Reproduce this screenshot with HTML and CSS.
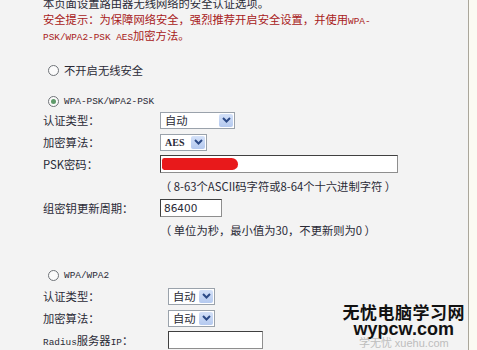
FILE: index.html
```
<!DOCTYPE html>
<html lang="zh-CN">
<head>
  <meta charset="UTF-8">
  <title>无线网络安全设置</title>
  <link rel="stylesheet" href="styles.css">
</head>
<body>
  <div class="page">
    <div class="intro">
      <p>本页面设置路由器无线网络的安全认证选项。</p>
      <p class="warn">安全提示：为保障网络安全，强烈推荐开启安全设置，并使用<span class="en">WPA-</span></p>
      <p class="warn"><span class="en">PSK/WPA2-PSK AES</span>加密方法。</p>
    </div>

    <div class="radio-row first">
      <span class="radio"></span>
      <span>不开启无线安全</span>
    </div>

    <div class="radio-row">
      <span class="radio checked"></span>
      <span class="en">WPA-PSK/WPA2-PSK</span>
    </div>
    <div class="row">
      <span class="label">认证类型：</span>
      <div class="select wide"><span class="val">自动</span><span class="arrow"><svg width="9" height="6" viewBox="0 0 9 6"><path d="M1 1l3.5 3.5L8 1" fill="none" stroke="#2c4a86" stroke-width="2"/></svg></span></div>
    </div>
    <div class="row">
      <span class="label">加密算法：</span>
      <div class="select"><span class="val en">AES</span><span class="arrow"><svg width="9" height="6" viewBox="0 0 9 6"><path d="M1 1l3.5 3.5L8 1" fill="none" stroke="#2c4a86" stroke-width="2"/></svg></span></div>
    </div>
    <div class="row">
      <span class="label">PSK密码：</span>
      <div class="field psk"><span class="scribble"></span></div>
    </div>
    <div class="row hint">（ 8-63个ASCII码字符或8-64个十六进制字符 ）</div>
    <div class="row">
      <span class="label">组密钥更新周期：</span>
      <div class="field short"><span class="num">86400</span></div>
    </div>
    <div class="row hint">（ 单位为秒，最小值为30，不更新则为0 ）</div>

    <div class="radio-row third">
      <span class="radio"></span>
      <span class="en">WPA/WPA2</span>
    </div>
    <div class="row second">
      <span class="label">认证类型：</span>
      <div class="select"><span class="val">自动</span><span class="arrow"><svg width="9" height="6" viewBox="0 0 9 6"><path d="M1 1l3.5 3.5L8 1" fill="none" stroke="#2c4a86" stroke-width="2"/></svg></span></div>
    </div>
    <div class="row second">
      <span class="label">加密算法：</span>
      <div class="select"><span class="val">自动</span><span class="arrow"><svg width="9" height="6" viewBox="0 0 9 6"><path d="M1 1l3.5 3.5L8 1" fill="none" stroke="#2c4a86" stroke-width="2"/></svg></span></div>
    </div>
    <div class="row second">
      <span class="label"><span class="en">Radius</span>服务器<span class="en">IP</span>：</span>
      <div class="field radius"></div>
    </div>

    <div class="mark">
      <div class="mark-cn">无忧电脑学习网</div>
      <div class="mark-en">wypcw.com</div>
      <div class="mark-sub">学无忧 xuehu.com</div>
    </div>
  </div>
</body>
</html>
```

FILE: styles.css
```
body {
  margin: 0;
  background: #fbfaf2;
  overflow: hidden;
  font-family: "Noto Sans CJK SC", "Liberation Sans", sans-serif;
  font-size: 11.3px;
  color: #2a2a36;
}

.page {
  position: relative;
  width: 469px;
  height: 350px;
  background: #f3f3f3;
  border-right: 1px solid #aaa69a;
  padding-left: 43px;
  box-sizing: border-box;
  overflow: hidden;
}

p {
  margin: 0;
  line-height: 16px;
  height: 16px;
  white-space: nowrap;
}

.intro {
  margin-top: -5px;
}

.warn {
  color: #a82020;
}

.en {
  font-family: "Liberation Mono", monospace;
  font-size: 9.4px;
}

.radio-row {
  display: flex;
  align-items: center;
  gap: 5px;
  height: 16px;
  padding-left: 5px;
  margin-top: 15px;
}

.radio-row.first {
  margin-top: 19px;
}

.radio-row.third {
  margin-top: 26px;
}

.radio {
  width: 9px;
  height: 9px;
  border: 1px solid #6f7378;
  border-radius: 50%;
  background: #fbfbfb;
  display: flex;
  align-items: center;
  justify-content: center;
}

.radio.checked::after {
  content: "";
  width: 5px;
  height: 5px;
  border-radius: 50%;
  background: #5f9a6a;
}

.row {
  display: flex;
  align-items: center;
  height: 22px;
}

.label {
  width: 117px;
  flex: none;
  white-space: nowrap;
}

.row.second .label {
  width: 125px;
}

.radio-row.third + .row {
  margin-top: 2px;
}

.hint {
  padding-left: 117px;
  white-space: nowrap;
}

.select {
  display: flex;
  align-items: center;
  justify-content: space-between;
  width: 47px;
  height: 17px;
  box-sizing: border-box;
  border: 1px solid #9aa2ab;
  background: #fff;
  padding: 0 1px 0 4px;
}

.select.wide {
  width: 75px;
}

.val.en {
  font-family: "Liberation Serif", serif;
  font-weight: bold;
  font-size: 10px;
}

.arrow {
  width: 14px;
  height: 13px;
  background: linear-gradient(#d4e1f8, #b4c9ef);
  border-radius: 2px;
  display: flex;
  align-items: center;
  justify-content: center;
}

.field {
  height: 18px;
  box-sizing: border-box;
  background: #fff;
  border: 1px solid #8e8e8e;
  border-top-color: #404040;
  border-left-color: #404040;
  display: flex;
  align-items: center;
}

.psk {
  width: 238px;
}

.scribble {
  display: block;
  width: 76px;
  height: 12px;
  margin-left: 1px;
  background: #e8191b;
  border-radius: 3px 8px 7px 3px;
}

.short {
  width: 62px;
}

.num {
  font-family: "DejaVu Sans", sans-serif;
  font-size: 10.5px;
  padding-left: 3px;
}

.radius {
  width: 95px;
}

.mark {
  position: absolute;
  right: 3px;
  top: 302px;
  text-align: center;
}

.mark-cn {
  font-size: 17px;
  line-height: 19px;
  font-weight: bold;
  color: #111;
  letter-spacing: 0.5px;
}

.mark-en {
  font-family: "Liberation Sans", sans-serif;
  font-size: 18px;
  line-height: 16px;
  font-weight: bold;
  color: #111;
}

.mark-sub {
  font-family: "Liberation Sans", sans-serif;
  font-size: 11px;
  line-height: 12px;
  color: #bdbdbd;
}
```
